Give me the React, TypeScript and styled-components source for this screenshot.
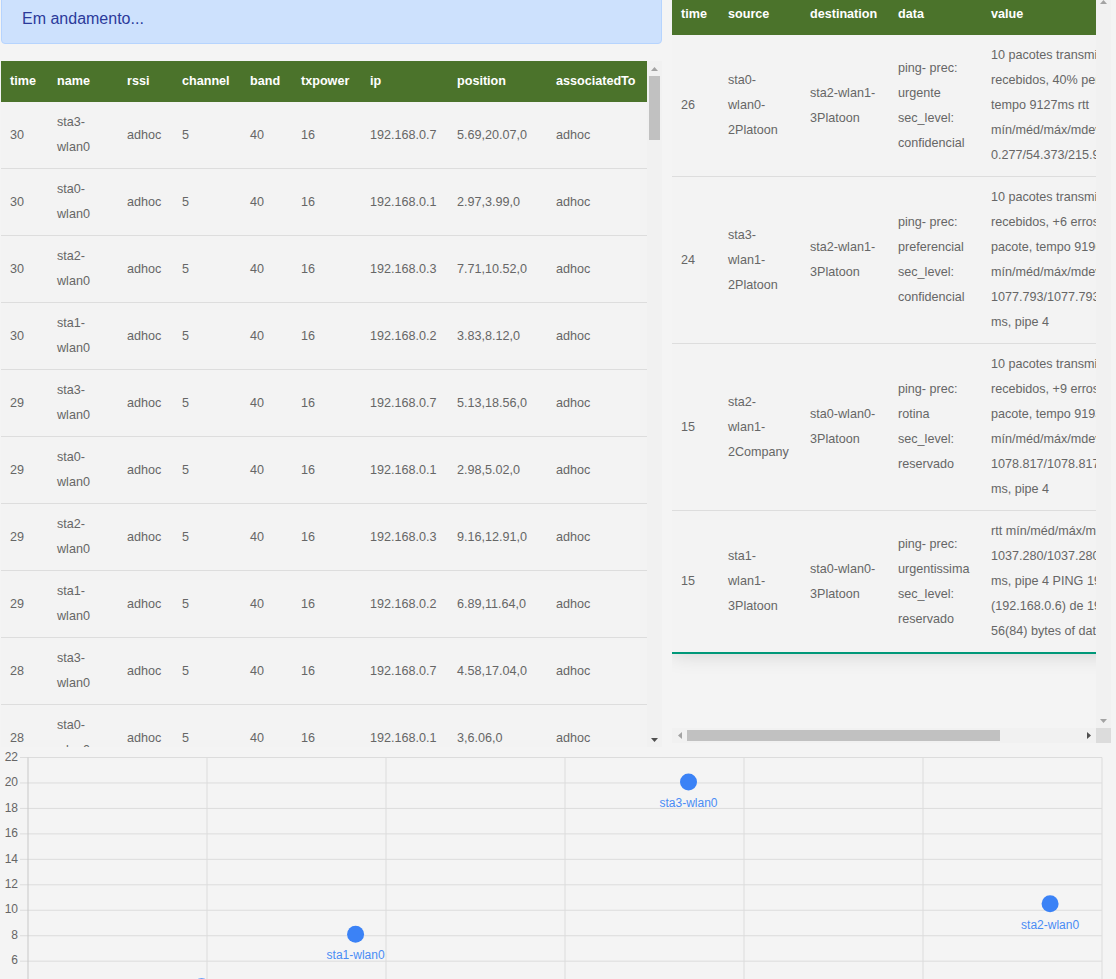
import React from "react";
import styled, { createGlobalStyle } from "styled-components";

const GlobalStyle = createGlobalStyle`
  html, body {
    margin: 0;
    padding: 0;
    overflow: hidden;
    background: #f4f4f4;
  }
  body {
    font-family: "Liberation Sans", Arial, sans-serif;
  }
`;

const LIGHT = "#a3a3a3";
const DARK = "#505050";

const Page = styled.div`
  width: 1116px;
  display: flex;
  flex-direction: column;
`;

const TopRow = styled.div`
  display: flex;
  align-items: flex-start;
  gap: 10px;
  margin-top: -10px;
  padding-left: 1px;
`;

const LeftCol = styled.div`
  width: 661px;
  display: flex;
  flex-direction: column;
  gap: 17px;
`;

const RightCol = styled.div`
  width: 439px;
  margin-top: 4px;
`;

const Alert = styled.div`
  box-sizing: border-box;
  height: 54px;
  padding: 16px 20px 12px 20px;
  line-height: 24px;
  font-size: 16px;
  color: #2b3a9b;
  background: #cde1fd;
  border: 1px solid #b6d4fe;
  border-radius: 4px;
`;

/* ---------- scroll panels with drawn scrollbars ---------- */

const LeftPanel = styled.div`
  display: flex;
  width: 661px;
  height: 686px;
`;

const RightPanel = styled.div`
  display: grid;
  grid-template-columns: 424px 15px;
  grid-template-rows: 734px 15px;
  width: 439px;
`;

const Viewport = styled.div<{ $w: number }>`
  width: ${(p) => p.$w}px;
  height: 100%;
  overflow: hidden;
`;

const VBar = styled.div`
  width: 15px;
  height: 100%;
  display: flex;
  flex-direction: column;
  background: #f1f1f1;
`;

const HBar = styled.div`
  height: 15px;
  display: flex;
  flex-direction: row;
  background: #f1f1f1;
`;

const ArrowButton = styled.div`
  width: 15px;
  height: 15px;
  flex: none;
  display: flex;
  align-items: center;
  justify-content: center;
`;

const VTrack = styled.div`
  flex: 1;
  display: flex;
  flex-direction: column;
`;

const HTrack = styled.div`
  flex: 1;
  display: flex;
  flex-direction: row;
`;

const VThumb = styled.div<{ $len: number }>`
  height: ${(p) => p.$len}px;
  margin: 0 2px;
  background: #c1c1c1;
`;

const HThumb = styled.div<{ $len: number }>`
  width: ${(p) => p.$len}px;
  margin: 2px 0 2px;
  background: #c1c1c1;
`;

const Corner = styled.div`
  background: #dcdcdc;
`;

type Dir = "up" | "down" | "left" | "right";
const arrowPts: Record<Dir, string> = {
  up: "0,4 3.5,0 7,4",
  down: "0,0 7,0 3.5,4",
  left: "4,0 4,7 0,3.5",
  right: "0,0 4,3.5 0,7",
};

function Arrow({ dir, color }: { dir: Dir; color: string }) {
  const vertical = dir === "up" || dir === "down";
  return (
    <ArrowButton>
      <svg width={vertical ? 7 : 4} height={vertical ? 4 : 7} viewBox={vertical ? "0 0 7 4" : "0 0 4 7"}>
        <polygon points={arrowPts[dir]} fill={color} />
      </svg>
    </ArrowButton>
  );
}

/* ---------- tables ---------- */

const Table = styled.table<{ $width: number; $shadow?: boolean }>`
  border-collapse: collapse;
  table-layout: fixed;
  width: ${(p) => p.$width}px;
  font-size: 12.6px;
  line-height: 25px;
  color: #666;
  ${(p) => (p.$shadow ? "box-shadow: 0 0 20px rgba(0, 0, 0, 0.15);" : "")}
`;

const HeadRow = styled.tr`
  background: #4b732b;
`;

const HeadCell = styled.th`
  color: #fff;
  font-weight: bold;
  text-align: left;
  padding: 8px 9px;
  white-space: nowrap;
  overflow: hidden;
`;

const Row = styled.tr`
  background: #f3f3f3;
  border-bottom: 1px solid #dddddd;
  &:last-of-type {
    border-bottom: 2px solid #009879;
  }
`;

const Cell = styled.td`
  padding: 8px 9px;
  vertical-align: middle;
  text-align: left;
`;

const ValueLine = styled.span`
  display: block;
  white-space: nowrap;
`;

const ChartWrap = styled.div`
  width: 1116px;
  height: 300px;
`;

/* ---------- data ---------- */

type Station = { name: string; ip: string };
const stations: Station[] = [
  { name: "sta3-wlan0", ip: "192.168.0.7" },
  { name: "sta0-wlan0", ip: "192.168.0.1" },
  { name: "sta2-wlan0", ip: "192.168.0.3" },
  { name: "sta1-wlan0", ip: "192.168.0.2" },
];

const knownPositions = [
  "5.69,20.07,0",
  "2.97,3.99,0",
  "7.71,10.52,0",
  "3.83,8.12,0",
  "5.13,18.56,0",
  "2.98,5.02,0",
  "9.16,12.91,0",
  "6.89,11.64,0",
  "4.58,17.04,0",
  "3,6.06,0",
  "8.42,11.37,0",
  "5.21,9.88,0",
];

const leftRows = Array.from({ length: 12 }, (_, i) => {
  const st = stations[i % 4];
  const time = 30 - Math.floor(i / 4);
  return { time, name: st.name, ip: st.ip, position: knownPositions[i] };
});

const leftCols = [47, 70, 55, 68, 51, 69, 87, 99, 100];
const leftHead = ["time", "name", "rssi", "channel", "band", "txpower", "ip", "position", "associatedTo"];

const rightCols = [47, 82, 88, 93, 230];
const rightHead = ["time", "source", "destination", "data", "value"];

const rightRows = [
  {
    time: 26,
    source: "sta0-wlan0-2Platoon",
    destination: "sta2-wlan1-3Platoon",
    data: "ping- prec: urgente sec_level: confidencial",
    value: [
      "10 pacotes transmitidos, 6",
      "recebidos, 40% perda de pacote,",
      "tempo 9127ms rtt",
      "mín/méd/máx/mdev =",
      "0.277/54.373/215.941/88.102 ms",
    ],
  },
  {
    time: 24,
    source: "sta3-wlan1-2Platoon",
    destination: "sta2-wlan1-3Platoon",
    data: "ping- prec: preferencial sec_level: confidencial",
    value: [
      "10 pacotes transmitidos, 1",
      "recebidos, +6 erros, 90% perda de",
      "pacote, tempo 9196ms rtt",
      "mín/méd/máx/mdev =",
      "1077.793/1077.793/1077.793/0.000",
      "ms, pipe 4",
    ],
  },
  {
    time: 15,
    source: "sta2-wlan1-2Company",
    destination: "sta0-wlan0-3Platoon",
    data: "ping- prec: rotina sec_level: reservado",
    value: [
      "10 pacotes transmitidos, 1",
      "recebidos, +9 erros, 90% perda de",
      "pacote, tempo 9193ms rtt",
      "mín/méd/máx/mdev =",
      "1078.817/1078.817/1078.817/0.000",
      "ms, pipe 4",
    ],
  },
  {
    time: 15,
    source: "sta1-wlan1-3Platoon",
    destination: "sta0-wlan0-3Platoon",
    data: "ping- prec: urgentissima sec_level: reservado",
    value: [
      "rtt mín/méd/máx/mdev =",
      "1037.280/1037.280/1037.280/0.000",
      "ms, pipe 4 PING 192.168.0.6",
      "(192.168.0.6) de 192.168.0.2 :",
      "56(84) bytes of data.",
    ],
  },
];

const points = [
  { name: "sta0-wlan0", x: 2.97, y: 3.99 },
  { name: "sta1-wlan0", x: 3.83, y: 8.12 },
  { name: "sta2-wlan0", x: 7.71, y: 10.52 },
  { name: "sta3-wlan0", x: 5.69, y: 20.07 },
];

const gx = (v: number) => 28 + (v - 2) * 179;
const gy = (v: number) => 10.5 + (22 - v) * 12.73;

function Chart() {
  const xTicks = [2, 3, 4, 5, 6, 7, 8];
  const yTicks = [0, 2, 4, 6, 8, 10, 12, 14, 16, 18, 20, 22];
  const bottom = gy(0);
  return (
    <svg width="1116" height="300" viewBox="0 0 1116 300">
      {yTicks.map((v) => (
        <g key={`y${v}`}>
          <line x1={20} x2={gx(8)} y1={gy(v)} y2={gy(v)} stroke="#dcdcdc" strokeWidth={1} />
          <text x={18} y={gy(v)} textAnchor="end" dominantBaseline="middle" fontSize={12} fill="#666" fontFamily="Liberation Sans, Arial, sans-serif">
            {v}
          </text>
        </g>
      ))}
      {xTicks.map((v) => (
        <g key={`x${v}`}>
          <line x1={gx(v)} x2={gx(v)} y1={gy(22)} y2={bottom + 8} stroke={v === 2 ? "#c8c8c8" : "#dcdcdc"} strokeWidth={1} />
          <text x={gx(v)} y={bottom + 20} textAnchor="middle" fontSize={12} fill="#666" fontFamily="Liberation Sans, Arial, sans-serif">
            {v}
          </text>
        </g>
      ))}
      {points.map((p) => (
        <g key={p.name}>
          <circle cx={gx(p.x)} cy={gy(p.y)} r={8.5} fill="#3b82f6" />
          <text x={gx(p.x)} y={gy(p.y) + 22} textAnchor="middle" dominantBaseline="middle" fontSize={12} fill="#4a8cf5" fontFamily="Liberation Sans, Arial, sans-serif">
            {p.name}
          </text>
        </g>
      ))}
    </svg>
  );
}

export default function App() {
  return (
    <Page>
      <GlobalStyle />
      <TopRow>
        <LeftCol>
          <Alert>Em andamento...</Alert>
          <LeftPanel>
            <Viewport $w={646}>
              <Table $width={646}>
                <colgroup>
                  {leftCols.map((w, i) => (
                    <col key={i} style={{ width: w }} />
                  ))}
                </colgroup>
                <thead>
                  <HeadRow>
                    {leftHead.map((h) => (
                      <HeadCell key={h}>{h}</HeadCell>
                    ))}
                  </HeadRow>
                </thead>
                <tbody>
                  {leftRows.map((r, i) => (
                    <Row key={i}>
                      <Cell>{r.time}</Cell>
                      <Cell>{r.name}</Cell>
                      <Cell>adhoc</Cell>
                      <Cell>5</Cell>
                      <Cell>40</Cell>
                      <Cell>16</Cell>
                      <Cell>{r.ip}</Cell>
                      <Cell>{r.position}</Cell>
                      <Cell>adhoc</Cell>
                    </Row>
                  ))}
                </tbody>
              </Table>
            </Viewport>
            <VBar>
              <Arrow dir="up" color={LIGHT} />
              <VTrack>
                <VThumb $len={64} />
              </VTrack>
              <Arrow dir="down" color={DARK} />
            </VBar>
          </LeftPanel>
        </LeftCol>
        <RightCol>
          <RightPanel>
            <Viewport $w={424}>
              <Table $width={540} $shadow>
                <colgroup>
                  {rightCols.map((w, i) => (
                    <col key={i} style={{ width: w }} />
                  ))}
                </colgroup>
                <thead>
                  <HeadRow>
                    {rightHead.map((h) => (
                      <HeadCell key={h}>{h}</HeadCell>
                    ))}
                  </HeadRow>
                </thead>
                <tbody>
                  {rightRows.map((r, i) => (
                    <Row key={i}>
                      <Cell>{r.time}</Cell>
                      <Cell>{r.source}</Cell>
                      <Cell>{r.destination}</Cell>
                      <Cell>{r.data}</Cell>
                      <Cell>
                        {r.value.map((l, j) => (
                          <ValueLine key={j}>{l}</ValueLine>
                        ))}
                      </Cell>
                    </Row>
                  ))}
                </tbody>
              </Table>
            </Viewport>
            <VBar>
              <Arrow dir="up" color={LIGHT} />
              <VTrack />
              <Arrow dir="down" color={LIGHT} />
            </VBar>
            <HBar>
              <Arrow dir="left" color={LIGHT} />
              <HTrack>
                <HThumb $len={313} />
              </HTrack>
              <Arrow dir="right" color={DARK} />
            </HBar>
            <Corner />
          </RightPanel>
        </RightCol>
      </TopRow>
      <ChartWrap>
        <Chart />
      </ChartWrap>
    </Page>
  );
}
